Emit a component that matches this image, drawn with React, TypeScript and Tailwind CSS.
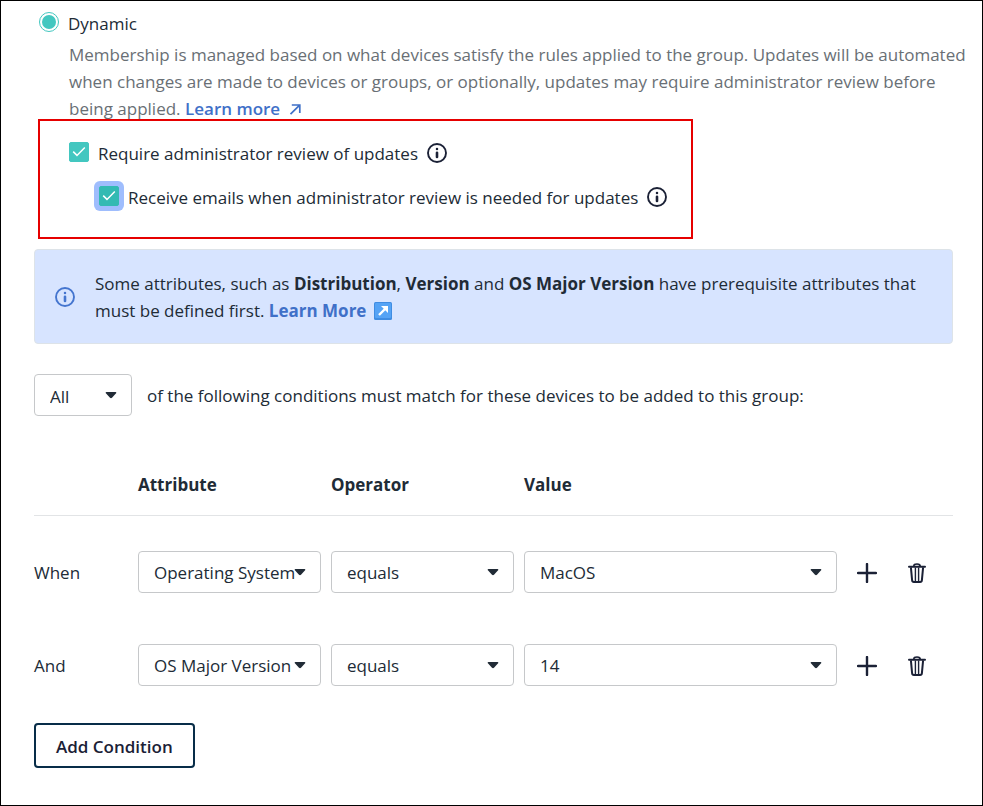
import React, { useState } from 'react';

interface Condition {
  id: number;
  prefix: string;
  attribute: string;
  operator: string;
  value: string;
}

const initialConditions: Condition[] = [
  { id: 1, prefix: 'When', attribute: 'Operating System', operator: 'equals', value: 'MacOS' },
  { id: 2, prefix: 'And', attribute: 'OS Major Version', operator: 'equals', value: '14' }
];

const InfoIcon: React.FC<{ className?: string }> = ({ className }) => (
  <svg viewBox="0 0 20 20" className={`size-5 shrink-0 ${className ?? ''}`} fill="none" aria-hidden="true">
    <circle cx="10" cy="10" r="9" stroke="currentColor" strokeWidth="1.9" />
    <circle cx="10" cy="6" r="1.25" fill="currentColor" />
    <path d="M10 9.8V14" stroke="currentColor" strokeWidth="2.6" strokeLinecap="round" />
  </svg>
);

const PlusIcon = () => (
  <svg viewBox="0 0 20 20" className="size-5" fill="none" aria-hidden="true">
    <path d="M10 1V19M1 10H19" stroke="currentColor" strokeWidth="2.4" strokeLinecap="round" />
  </svg>
);

const TrashIcon = () => (
  <svg viewBox="0 0 18 20" className="h-5 w-[18px]" fill="none" stroke="currentColor" aria-hidden="true">
    <path d="M1 3.8H17" strokeWidth="2" strokeLinecap="round" />
    <path d="M5.8 3.4C5.8 1.6 6.8 1 9 1S12.2 1.6 12.2 3.4" strokeWidth="1.7" />
    <path
      d="M2.9 4.4L4.1 17.2C4.2 18.5 4.8 19 5.9 19H12.1C13.2 19 13.8 18.5 13.9 17.2L15.1 4.4"
      strokeWidth="2"
    />
    <path d="M7.4 4.5V18.6M10.6 4.5V18.6" strokeWidth="1.4" />
  </svg>
);

interface SelectProps {
  label: string;
  options: string[];
  className?: string;
}

const Select: React.FC<SelectProps> = ({ label, options, className }) => (
  <div className={`relative ${className ?? ''}`}>
    <select
      aria-label={label}
      className="block h-[42px] w-full appearance-none rounded border border-[#c6c8ca] bg-white pl-[15px] pr-6 pt-0.5 text-[#212b36]"
    >
      {options.map((option) => (
        <option key={option}>{option}</option>
      ))}
    </select>
    <svg
      viewBox="0 0 12 8"
      className="pointer-events-none absolute right-[15px] top-[17px] h-2 w-3"
      fill="#212b36"
      aria-hidden="true"
    >
      <path d="M1.4 1H10.6C11.3 1 11.6 1.8 11.1 2.3L7 6.7C6.4 7.3 5.6 7.3 5 6.7L0.9 2.3C0.4 1.8 0.7 1 1.4 1Z" />
    </svg>
  </div>
);

interface CheckboxProps {
  id: string;
  label: string;
  highlighted?: boolean;
}

const Checkbox: React.FC<CheckboxProps> = ({ id, label, highlighted }) => {
  const [checked, setChecked] = useState(true);

  return (
    <div className="flex items-start">
      <span className="mt-0.5 grid size-5 shrink-0">
        <input
          id={id}
          type="checkbox"
          checked={checked}
          onChange={() => setChecked(!checked)}
          className={`col-start-1 row-start-1 size-5 appearance-none rounded-[2px] ${
            highlighted
              ? 'border border-[#33bab3] checked:bg-[#33bab3] ring-5 ring-[#9fbdfd]'
              : 'border border-[#43c7c0] checked:bg-[#43c7c0]'
          }`}
        />
        {checked && (
          <svg viewBox="0 0 20 20" className="pointer-events-none col-start-1 row-start-1 size-5" fill="none" aria-hidden="true">
            <path d="M4.2 9.6L8 13.4L15.8 5.4" stroke="white" strokeWidth="1.5" />
          </svg>
        )}
      </span>
      <label htmlFor={id} className="ml-[9px]">{label}</label>
      <InfoIcon className="ml-[9px] mt-[3px] text-[#1b2136]" />
    </div>
  );
};

export default function App() {
  const [conditions, setConditions] = useState(initialConditions);

  const addCondition = () => {
    const id = Date.now();
    setConditions([...conditions, { id, prefix: 'And', attribute: 'OS Major Version', operator: 'equals', value: '14' }]);
  };

  const removeCondition = (id: number) => {
    setConditions(conditions.filter((condition) => condition.id !== id));
  };

  return (
    <main className="min-h-screen border border-black bg-white pb-9 pl-[33px] pr-[29px] pt-[9px] font-['Open_Sans',sans-serif] text-[17px] leading-[27px] text-[#212b36]">
      {/* Membership type */}
      <div className="flex items-start pl-[5px]">
        <input
          id="dynamic"
          type="radio"
          name="membership"
          defaultChecked
          className="mt-0.5 size-5 appearance-none rounded-full border border-[#43c7c0] bg-white bg-clip-content p-0.5 checked:bg-[#43c7c0]"
        />
        <label htmlFor="dynamic" className="ml-[9px]">Dynamic</label>
      </div>
      <p className="-mr-5 mt-1 pl-[35px] text-[#696f75]">
        Membership is managed based on what devices satisfy the rules applied to the group. Updates will be automated
        when changes are made to devices or groups, or optionally, updates may require administrator review before
        being applied.{' '}
        <a href="#" className="font-semibold text-[#3f70c8]">
          Learn more
          <svg viewBox="0 0 12 12" className="ml-[9px] inline size-3 align-baseline" fill="none" aria-hidden="true">
            <path d="M1.5 11.2L10.4 2.3M2.8 2H10.8V10" stroke="currentColor" strokeWidth="1.7" />
          </svg>
        </a>
      </p>

      {/* Review settings */}
      <section className="-mt-[3px] ml-1 flex h-[120px] w-[655px] max-w-full flex-col gap-[17px] border-2 border-[#e60000] pl-[29px] pt-[19px]">
        <Checkbox id="require-review" label="Require administrator review of updates" />
        <div className="pl-[30px]">
          <Checkbox id="receive-emails" label="Receive emails when administrator review is needed for updates" highlighted />
        </div>
      </section>

      {/* Notice */}
      <div className="mt-[10px] flex items-center rounded border border-[#dde3e8] bg-[#d7e4ff] px-5 pb-[19px] pt-5">
        <InfoIcon className="text-[#4475cf]" />
        <p className="ml-5">
          Some attributes, such as <strong>Distribution</strong>, <strong>Version</strong> and{' '}
          <strong>OS Major Version</strong> have prerequisite attributes that must be defined first.{' '}
          <a href="#" className="font-bold text-[#3f70c8]">
            Learn More
            <svg viewBox="0 0 18 18" className="ml-2 inline size-[18px] align-[-3px]" fill="none" aria-hidden="true">
              <rect width="18" height="18" rx="1.5" fill="#3f8ce2" />
              <rect x="1" y="1" width="16" height="15" rx="1" fill="#55a3f5" />
              <path d="M5 13L11.5 6.5" stroke="white" strokeWidth="2.4" />
              <path d="M7 4H14V11Z" fill="white" />
            </svg>
          </a>
        </p>
      </div>

      {/* Match mode */}
      <div className="mt-[30px] flex items-center">
        <Select label="Match mode" options={['All', 'Any']} className="w-[98px] shrink-0" />
        <span className="ml-[15px]">of the following conditions must match for these devices to be added to this group:</span>
      </div>

      {/* Conditions */}
      <table className="mt-[55px] w-full table-fixed text-left">
        <thead>
          <tr className="border-b border-[#e2e4e6] align-top">
            <td className="h-11 w-[104px]" />
            <th className="w-[21%]">Attribute</th>
            <th className="w-[21%]">Operator</th>
            <th>Value</th>
            <td className="w-[116px]" />
          </tr>
        </thead>
        <tbody>
          {conditions.map((condition) => (
            <tr key={condition.id}>
              <td className="h-[93px] pt-[22px]">{condition.prefix}</td>
              <td className="pr-[10px] pt-5">
                <Select label="Attribute" options={[condition.attribute]} />
              </td>
              <td className="pr-[10px] pt-5">
                <Select label="Operator" options={[condition.operator]} />
              </td>
              <td className="pt-5">
                <Select label="Value" options={[condition.value]} />
              </td>
              <td className="pl-5 pt-[22px]">
                <div className="flex items-center gap-[31px] text-[#1b2136]">
                  <button type="button" aria-label="Add condition" onClick={addCondition}>
                    <PlusIcon />
                  </button>
                  <button type="button" aria-label="Remove condition" onClick={() => removeCondition(condition.id)}>
                    <TrashIcon />
                  </button>
                </div>
              </td>
            </tr>
          ))}
        </tbody>
      </table>

      <button
        type="button"
        onClick={addCondition}
        className="mt-[22px] h-[45px] rounded border-2 border-[#082d48] px-5 pt-0.5 font-semibold text-[#1b2136]"
      >
        Add Condition
      </button>
    </main>
  );
}
